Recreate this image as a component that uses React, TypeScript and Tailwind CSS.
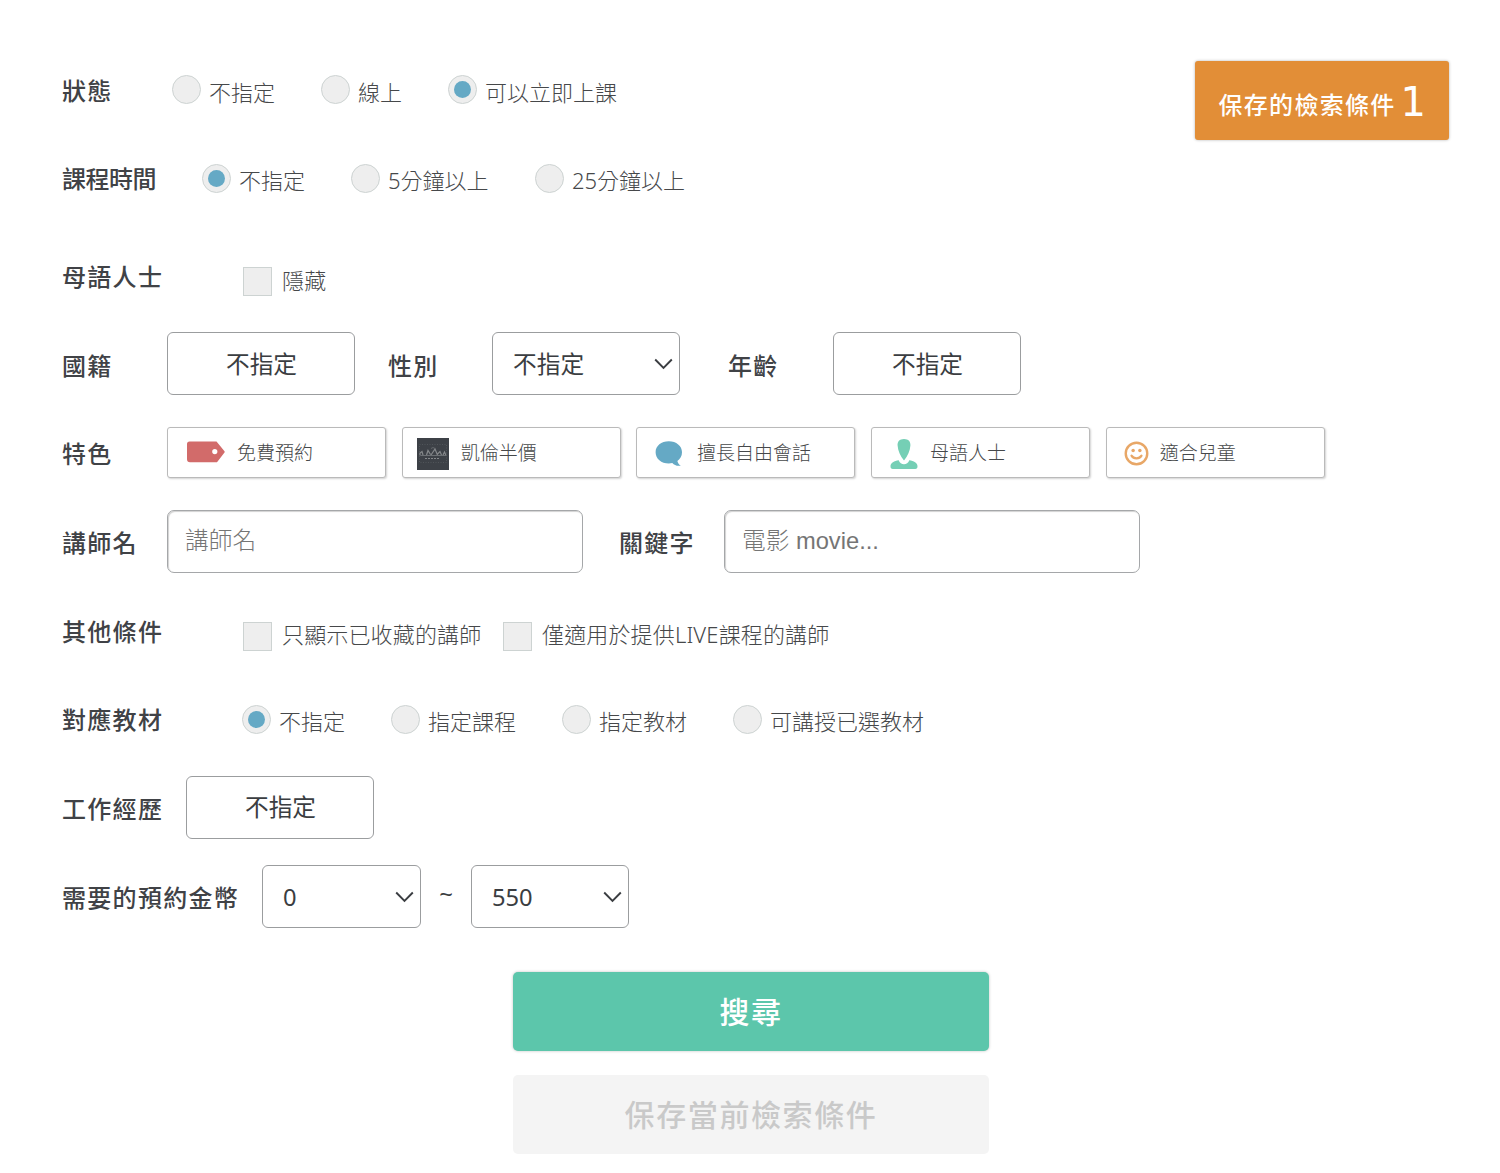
import type { ReactNode } from 'react';

const ui = "font-['Noto_Sans','Noto_Sans_CJK_TC',sans-serif]";

function Row({ children, className = '' }: { children: ReactNode; className?: string }) {
  return <div className={`flex h-[88.7px] shrink-0 items-start ${className}`}>{children}</div>;
}

function Label({ children, className = '' }: { children: ReactNode; className?: string }) {
  return (
    <div className={`mt-[25.6px] shrink-0 whitespace-nowrap text-[24px] leading-9 font-medium text-[#404246] ${className}`}>
      {children}
    </div>
  );
}

function Radio({ label, checked, className }: { label: string; checked?: boolean; className: string }) {
  return (
    <label className={`flex shrink-0 items-start ${className}`}>
      <span className="mt-7 flex size-[29px] shrink-0 items-center justify-center rounded-full border border-[#cdd3d2] bg-[#eeeeee]">
        {checked && <span className="size-[17px] rounded-full bg-[#65a9c5]" />}
      </span>
      <span className="mt-[28.6px] ml-2 text-[22px] leading-8 font-light whitespace-nowrap text-[#46484a]">{label}</span>
    </label>
  );
}

function Check({ label, className = '' }: { label: string; className?: string }) {
  return (
    <label className={`flex shrink-0 items-start ${className}`}>
      <span className="mt-[33.5px] size-[29px] shrink-0 border border-[#cdd3d2] bg-[#eeeeee]" />
      <span className="mt-[30.3px] ml-[10px] text-[22px] leading-8 font-light tracking-[0.15px] whitespace-nowrap text-[#46484a]">{label}</span>
    </label>
  );
}

const box = 'flex h-[63px] shrink-0 items-center rounded-[6px] border border-[#9b9d9f] bg-white text-[23.7px] text-[#3a3d41]';

function Picker({ className = '' }: { className?: string }) {
  return <button className={`${box} mt-[10px] w-[188px] justify-center pt-[2px] pl-[1px] ${className}`}>不指定</button>;
}

function Dropdown({ value, className }: { value: string; className: string }) {
  return (
    <button className={`${box} justify-between pr-[6px] pl-5 ${className}`}>
      <span className="pt-[2px]">{value}</span>
      <svg width="19" height="12" viewBox="0 0 19 12" fill="none" stroke="#3a3d41" strokeWidth="1.9">
        <path d="M1.2 1.5 9.5 9.8 17.8 1.5" />
      </svg>
    </button>
  );
}

function Feature({ icon, label, className }: { icon: ReactNode; label: string; className: string }) {
  return (
    <button className={`flex h-[51px] w-[219px] items-center rounded-[3px] border border-[#bababa] bg-white shadow-[1px_1px_2px_rgba(0,0,0,0.18)] ${className}`}>
      {icon}
      <span className="pt-px text-[19px] leading-7 font-light whitespace-nowrap text-[#46484a]">{label}</span>
    </button>
  );
}

const TagIcon = () => (
  <svg className="mr-3 shrink-0" width="38" height="22" viewBox="0 0 38 22">
    <path
      fill="#d26b6a"
      fillRule="evenodd"
      d="M2.500 .5H29.500L37.500 10.200Q38 10.900 37.500 11.600L30 21.300H3Q0 21.300 0 18.300V3Q0 .5 2.500 .5ZM27.800 8a2.600 2.600 0 1 0 0 5.200 2.600 2.600 0 0 0 0-5.200Z"
    />
  </svg>
);

const CaranIcon = () => (
  <svg className="mt-[4px] mr-[12px] shrink-0" width="32" height="32" viewBox="0 0 32 32">
    <rect width="32" height="32" fill="#3d4147" />
    <rect x="2.5" y="6.5" width="27" height="18" fill="none" stroke="#5a5e63" strokeWidth="0.7" strokeDasharray="1 1.5" />
    <path d="M3 17.500V15l2-1.500 1 3.500M9.500 17l1.500-4.500 2.500 4M14 17l4-6 2.500 6M20.500 16l2.500-2.500 1.500 3.500M26 17l1.500-3 1.500 3.500" fill="none" stroke="#85888b" strokeWidth="1.2" />
    <path d="M3.500 17.500H29" stroke="#6c7074" strokeWidth="1" />
    <path d="M8 20.500H23" stroke="#85888b" strokeWidth="1.2" strokeDasharray="2 1" />
    <path d="M14 10.500 16 9.500 18 10.500" fill="none" stroke="#6c7074" strokeWidth=".8" />
  </svg>
);

const ChatIcon = () => (
  <svg className="mt-[4px] mr-[14px] shrink-0" width="28" height="26" viewBox="0 0 28 26">
    <path
      fill="#65a9c5"
      d="M13.800 .3C21.300 .3 27 5 27 11.200c0 3.900-1.800 6.800-4.600 8.700.3 1.900 1.300 3.300 3.400 4.700-3.500.8-6.400-.4-8.500-2.600-1.100.3-2.200.5-3.500.5C6.300 22.500 .6 17.600 .6 11.200S6.300 .3 13.800 .3Z"
    />
  </svg>
);

const PersonIcon = () => (
  <svg className="mt-[4px] mr-[12px] shrink-0" width="28" height="32" viewBox="0 0 28 32">
    <path fill="#75cfb5" d="M14 1c4.500 0 6.700 2.800 6.400 6.600C20 13 17.800 18 14 22.500 10.200 18 8 13 7.600 7.600 7.300 3.800 9.500 1 14 1Z" />
    <path
      fill="#75cfb5"
      d="M8.700 22.300C9.500 25 11.800 26.300 14 26.300s4.500-1.300 5.300-4c4.400.4 8.200 2.900 8.200 6 0 1.800-.7 2.700-2.300 2.700H2.800C1.200 31 .5 30.100.5 28.300c0-3.100 3.800-5.600 8.200-6Z"
    />
  </svg>
);

const SmileIcon = () => (
  <svg className="mt-[3px] mr-[11px] shrink-0" width="25" height="25" viewBox="0 0 26 26">
    <circle cx="13" cy="13" r="11.2" fill="none" stroke="#e8a767" strokeWidth="2.5" />
    <circle cx="9.5" cy="9.800" r="1.8" fill="#e8a767" />
    <circle cx="16.5" cy="9.800" r="1.8" fill="#e8a767" />
    <path d="M7.800 15.200c1.200 2 3 2.800 5.200 2.800s4-.8 5.200-2.800" fill="none" stroke="#e8a767" strokeWidth="2.300" strokeLinecap="round" />
  </svg>
);

const field =
  "mt-[11px] h-[63px] w-[416px] shrink-0 rounded-[7px] border border-[#a5a7a9] bg-white px-[17px] pb-[1px] font-['Liberation_Sans','Noto_Sans_CJK_TC',sans-serif] text-[23.7px] placeholder:text-[#757575] placeholder:opacity-100 shadow-[inset_1px_1px_1px_rgba(0,0,0,0.18)] outline-none";

export default function App() {
  return (
    <main className={`flex h-[1173px] w-[1500px] flex-col overflow-hidden bg-white pt-[47px] pl-[62px] ${ui}`}>
      <div className="flex">
        <div className="w-[1132.5px]">
          <Row>
            <Label className="w-[110px] tracking-[1.3px]">狀態</Label>
            <Radio label="不指定" className="w-[149px]" />
            <Radio label="線上" className="w-[127px]" />
            <Radio label="可以立即上課" checked className="" />
          </Row>
          <Row className="mb-[9px]">
            <Label className="w-[140px] tracking-[-0.5px]">課程時間</Label>
            <Radio label="不指定" checked className="w-[149px]" />
            <Radio label="5分鐘以上" className="w-[184px]" />
            <Radio label="25分鐘以上" className="" />
          </Row>
        </div>
        <button className="mt-[14px] flex h-[79px] w-[254px] items-center rounded-[3px] bg-[#e28e37] pt-1 pl-[24px] text-[24px] tracking-[1.3px] whitespace-nowrap text-white shadow-[0_0_3px_rgba(0,0,0,0.3)]">
          <span className="mt-[5px] font-medium">保存的檢索條件</span>
          <span className="-mt-[2px] ml-[5px] font-['DejaVu_Sans',sans-serif] text-[40px] leading-none tracking-normal">1</span>
        </button>
      </div>

      <Row>
        <Label className="w-[181px] tracking-[1.3px]">母語人士</Label>
        <Check label="隱藏" />
      </Row>

      <Row>
        <Label className="w-[105px] tracking-[1.3px]">國籍</Label>
        <Picker />
        <Label className="ml-[33px] w-[104px] tracking-[1.3px]">性別</Label>
        <Dropdown value="不指定" className="mt-[10px] w-[188px]" />
        <Label className="ml-[48px] w-[105px] tracking-[1.3px]">年齡</Label>
        <Picker />
      </Row>

      <Row>
        <Label className="w-[105px] tracking-[1.3px]">特色</Label>
        <div className="mt-[16px] flex gap-[15.7px]">
          <Feature icon={<TagIcon />} label="免費預約" className="pl-[19px]" />
          <Feature icon={<CaranIcon />} label="凱倫半價" className="pl-[14px]" />
          <Feature icon={<ChatIcon />} label="擅長自由會話" className="pl-[17.5px]" />
          <Feature icon={<PersonIcon />} label="母語人士" className="pl-[18px]" />
          <Feature icon={<SmileIcon />} label="適合兒童" className="pl-[17px]" />
        </div>
      </Row>

      <Row>
        <Label className="w-[105px] tracking-[1.3px]">講師名</Label>
        <input className={`${field} font-light`} placeholder="講師名" />
        <Label className="ml-[36px] w-[105px] tracking-[1.3px]">關鍵字</Label>
        <input className={`${field} font-light`} placeholder="電影 movie..." />
      </Row>

      <Row>
        <Label className="w-[181px] tracking-[1.3px]">其他條件</Label>
        <Check label="只顯示已收藏的講師" className="w-[260px]" />
        <Check label="僅適用於提供LIVE課程的講師" />
      </Row>

      <Row>
        <Label className="w-[180px] tracking-[1.3px]">對應教材</Label>
        <Radio label="不指定" checked className="w-[149px]" />
        <Radio label="指定課程" className="w-[171px]" />
        <Radio label="指定教材" className="w-[171px]" />
        <Radio label="可講授已選教材" className="" />
      </Row>

      <Row>
        <Label className="w-[124px] tracking-[1.3px]">工作經歷</Label>
        <Picker />
      </Row>

      <Row>
        <Label className="w-[200px] tracking-[1.3px]">需要的預約金幣</Label>
        <Dropdown value="0" className="mt-[11px] w-[159px]" />
        <span className="mt-[24px] w-[50px] text-center text-[24px] leading-8 text-[#3a3d41]">~</span>
        <Dropdown value="550" className="mt-[11px] w-[158px]" />
      </Row>

      <div className="mt-[29px] ml-[451px] flex w-[476px] shrink-0 flex-col gap-[24px] text-[30px] tracking-[1.6px]">
        <button className="h-[79px] rounded-[5px] bg-[#5cc6ab] font-medium text-white shadow-[0_0_3px_rgba(0,0,0,0.25)]">搜尋</button>
        <button className="h-[79px] rounded-[5px] bg-[#f4f4f4] font-medium text-[#c9c9c9]">保存當前檢索條件</button>
      </div>
    </main>
  );
}
